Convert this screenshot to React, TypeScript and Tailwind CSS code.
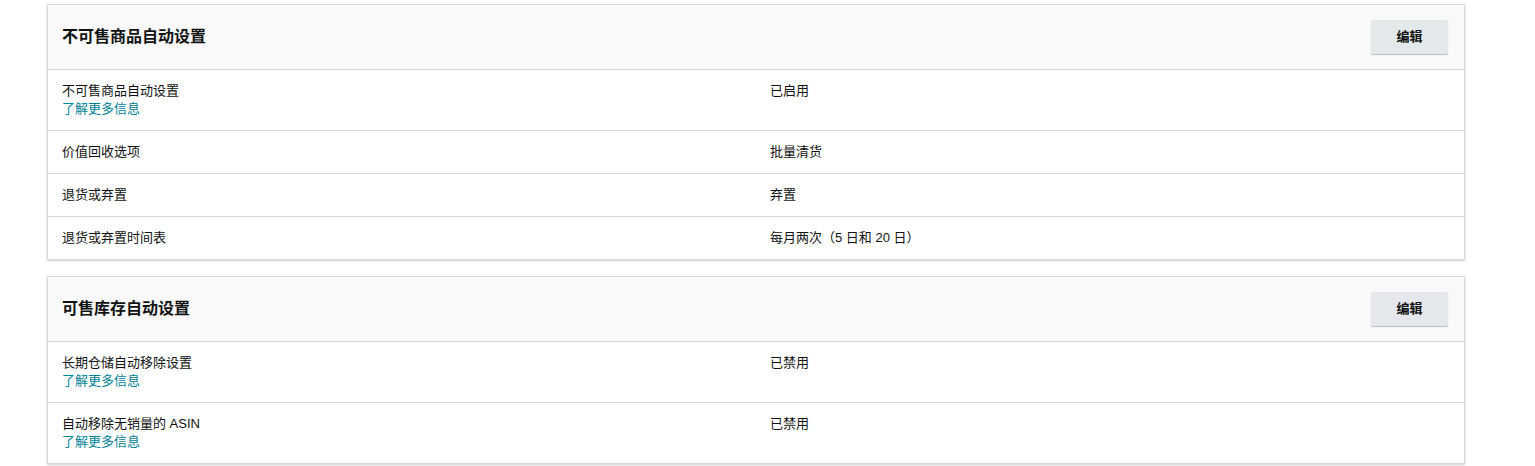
import React from 'react';

interface Row {
  label: string;
  value: string;
  link?: boolean;
}

interface Section {
  title: string;
  rows: Row[];
}

const sections: Section[] = [
  {
    title: '不可售商品自动设置',
    rows: [
      { label: '不可售商品自动设置', value: '已启用', link: true },
      { label: '价值回收选项', value: '批量清货' },
      { label: '退货或弃置', value: '弃置' },
      { label: '退货或弃置时间表', value: '每月两次（5 日和 20 日）' },
    ],
  },
  {
    title: '可售库存自动设置',
    rows: [
      { label: '长期仓储自动移除设置', value: '已禁用', link: true },
      { label: '自动移除无销量的 ASIN', value: '已禁用', link: true },
    ],
  },
];

const SettingsCard: React.FC<{ section: Section; btnBg: string }> = ({ section, btnBg }) => (
  <div className="border border-[#d5d9d9] bg-white shadow-[0_1px_2px_rgba(0,0,0,0.18)]">
    {/* header */}
    <div className="flex h-[65px] items-center justify-between border-b border-[#d5d9d9] bg-[#f9f9f9] pl-[14px] pr-[16px]">
      <h2 className="text-[16px] font-bold text-[#0f1111]">{section.title}</h2>
      <button
        className={`h-[34px] w-[77px] rounded-[2px] text-[13px] font-bold text-[#0f1111] shadow-[0_1px_1px_rgba(0,0,0,0.25)] ${btnBg}`}
      >
        编辑
      </button>
    </div>
    {section.rows.map((row, i) => (
      <div
        key={i}
        className={`grid grid-cols-2 text-[13px] leading-[18px] text-[#0f1111] ${
          i < section.rows.length - 1 ? 'border-b border-[#d5d9d9]' : ''
        }`}
      >
        <div className="px-[14px] py-[12px]">
          <div>{row.label}</div>
          {row.link && <a className="block cursor-pointer text-[#008296]">了解更多信息</a>}
        </div>
        <div className="px-[14px] py-[12px]">{row.value}</div>
      </div>
    ))}
  </div>
);

export default function App() {
  return (
    <div
      className="min-h-[466px] bg-white pl-[47px] pr-[70px] pt-[4px]"
      style={{ fontFamily: '"Liberation Sans", "Noto Sans CJK SC", sans-serif' }}
    >
      <div className="flex flex-col gap-[16px]">
        <SettingsCard section={sections[0]} btnBg="bg-[#e3e9ea]" />
        <SettingsCard section={sections[1]} btnBg="bg-[#e4e7eb]" />
      </div>
    </div>
  );
}
